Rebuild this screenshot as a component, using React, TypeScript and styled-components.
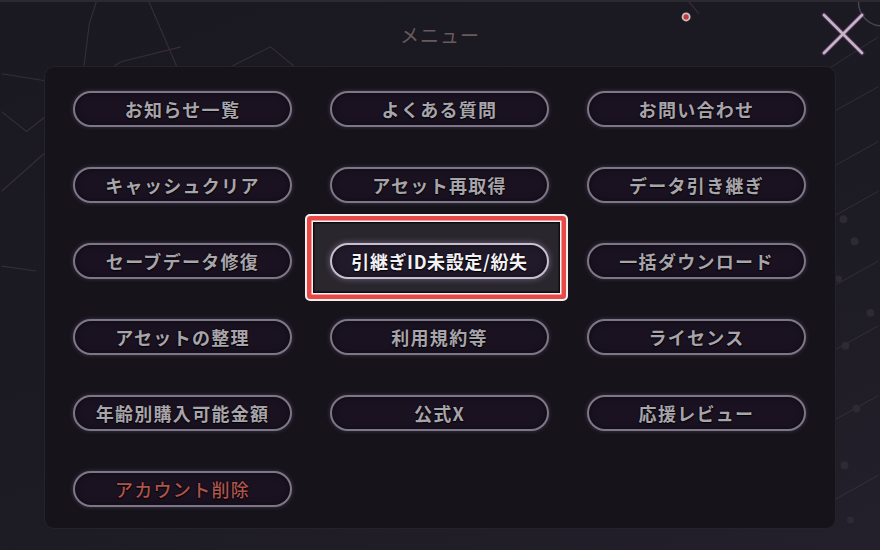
import React from "react";
import styled, { createGlobalStyle, css } from "styled-components";

const GlobalStyle = createGlobalStyle`
  html, body {
    margin: 0;
    padding: 0;
    background: #1b1920;
  }
  body {
    font-family: "Noto Sans CJK JP", "Noto Sans", sans-serif;
  }
  * { box-sizing: border-box; }
`;

const Screen = styled.div`
  position: relative;
  width: 880px;
  height: 550px;
  overflow: hidden;
  display: flex;
  flex-direction: column;
  background: linear-gradient(160deg, #1a1820 0%, #1c1a22 55%, #23202b 100%);
  border-top: 2px solid #2b2931;
`;

const BgArt = styled.svg`
  position: absolute;
  inset: 0;
  width: 100%;
  height: 100%;
  pointer-events: none;
`;

const Header = styled.header`
  position: relative;
  height: 65px;
  display: flex;
  align-items: center;
  justify-content: center;
`;

const Title = styled.h1`
  margin: 0;
  font-size: 19px;
  font-weight: 400;
  letter-spacing: 1px;
  color: #6a5a5c;
`;

const CloseButton = styled.button`
  position: absolute;
  right: 14px;
  top: 9px;
  width: 46px;
  height: 46px;
  padding: 0;
  border: none;
  background: transparent;
  display: flex;
  align-items: center;
  justify-content: center;
`;

const Panel = styled.main`
  position: relative;
  margin: 0 45px;
  height: 461px;
  border-radius: 9px;
  background: #16141a;
  box-shadow: 0 0 0 1px #25222a;
  padding: 24px 28px 21px 28px;
  display: grid;
  grid-template-columns: repeat(3, 219px);
  grid-auto-rows: 36px;
  column-gap: 38px;
  row-gap: 40px;
  align-content: start;
`;

const Cell = styled.div`
  position: relative;
`;

const HighlightFrame = styled.div`
  position: absolute;
  left: -25px;
  right: -19px;
  top: -29px;
  bottom: -22px;
  border-radius: 5px;
  background: #29262d;
  border: 2px solid #f4f0f0;
  box-shadow: inset 0 0 0 4.5px #e84848, inset 0 0 0 6px #f6f2f2, inset 0 0 0 7.5px #0e0e12;
`;

const MenuButton = styled.button<{ $tone?: "normal" | "danger" | "active" }>`
  position: relative;
  width: 100%;
  height: 36px;
  border-radius: 18px;
  border: 2px solid #7d7684;
  background: #1a1221;
  box-shadow: 0 0 4px rgba(150, 110, 190, 0.35), inset 0 0 6px rgba(0, 0, 0, 0.5);
  font-family: "Noto Sans CJK JP", "Noto Sans", sans-serif;
  font-size: 18px;
  font-weight: 700;
  letter-spacing: 1.3px;
  color: #a8a4ab;
  text-shadow: 0 0 2px #000, 0 1px 1px #000;
  display: flex;
  align-items: center;
  justify-content: center;
  padding: 0;
  line-height: 1;

  ${(p) =>
    p.$tone === "danger" &&
    css`
      color: #ad544d;
      font-weight: 500;
    `}

  ${(p) =>
    p.$tone === "active" &&
    css`
      border-color: #c6bfcc;
      background: #211a2b;
      color: #f4f2f6;
      letter-spacing: 0.6px;
      box-shadow: 0 0 6px rgba(190, 160, 220, 0.5), inset 0 0 6px rgba(0, 0, 0, 0.5);
    `}
`;

type Item = { label: string; tone?: "normal" | "danger" | "active" };

const items: Item[] = [
  { label: "お知らせ一覧" },
  { label: "よくある質問" },
  { label: "お問い合わせ" },
  { label: "キャッシュクリア" },
  { label: "アセット再取得" },
  { label: "データ引き継ぎ" },
  { label: "セーブデータ修復" },
  { label: "引継ぎID未設定/紛失", tone: "active" },
  { label: "一括ダウンロード" },
  { label: "アセットの整理" },
  { label: "利用規約等" },
  { label: "ライセンス" },
  { label: "年齢別購入可能金額" },
  { label: "公式X" },
  { label: "応援レビュー" },
  { label: "アカウント削除", tone: "danger" },
];

const Background = () => (
  <BgArt viewBox="0 0 880 550">
    <g stroke="#3a3038" strokeWidth="1.2" fill="none" opacity="0.9">
      <polyline points="95,0 88,22 82,70 74,110" />
      <polyline points="148,0 178,70 200,130" />
      <polyline points="0,72 80,85 120,60 180,45" />
      <polyline points="0,110 25,130 48,112" />
      <polyline points="300,70 270,45 230,65" />
      <polyline points="0,190 45,150" />
      <polyline points="0,265 35,270" />
      <polyline points="690,0 700,12" />
    </g>
    <g stroke="#3a3240" strokeWidth="1" fill="none" opacity="0.8">
      <line x1="835" y1="110" x2="880" y2="85" />
      <line x1="835" y1="165" x2="880" y2="140" />
      <line x1="835" y1="215" x2="880" y2="190" />
      <line x1="835" y1="285" x2="880" y2="260" />
      <line x1="835" y1="350" x2="880" y2="325" />
      <line x1="835" y1="420" x2="880" y2="395" />
      <line x1="835" y1="500" x2="880" y2="475" />
      <line x1="700" y1="150" x2="880" y2="35" />
    </g>
    <g fill="#2e2a34">
      <circle cx="845" cy="218" r="4" />
      <circle cx="856" cy="240" r="4" />
      <circle cx="840" cy="278" r="3.5" />
      <circle cx="872" cy="312" r="4" />
      <circle cx="847" cy="345" r="4" />
      <circle cx="858" cy="408" r="4" />
      <circle cx="846" cy="465" r="4" />
      <circle cx="852" cy="520" r="3.5" />
    </g>
    <circle cx="884" cy="0" r="24" stroke="#4a4450" strokeWidth="1.5" fill="none" />
    <circle cx="687" cy="15" r="4.5" fill="#c9c0c4" />
    <circle cx="687" cy="15" r="2.6" fill="#c43a3a" />
  </BgArt>
);

const CloseIcon = () => (
  <svg width="46" height="46" viewBox="0 0 46 46">
    <g stroke="#7a3f8a" strokeWidth="5" strokeLinecap="round" opacity="0.45">
      <line x1="4" y1="4" x2="42" y2="42" />
      <line x1="42" y1="4" x2="4" y2="42" />
    </g>
    <g stroke="#c4b4c4" strokeWidth="2.8" strokeLinecap="round">
      <line x1="4" y1="4" x2="42" y2="42" />
      <line x1="42" y1="4" x2="4" y2="42" />
    </g>
  </svg>
);

export default function App() {
  return (
    <>
      <GlobalStyle />
      <Screen>
        <Background />
        <Header>
          <Title>メニュー</Title>
          <CloseButton aria-label="close">
            <CloseIcon />
          </CloseButton>
        </Header>
        <Panel>
          {items.map((it) => (
            <Cell key={it.label}>
              {it.tone === "active" && <HighlightFrame />}
              <MenuButton $tone={it.tone}>{it.label}</MenuButton>
            </Cell>
          ))}
        </Panel>
      </Screen>
    </>
  );
}
